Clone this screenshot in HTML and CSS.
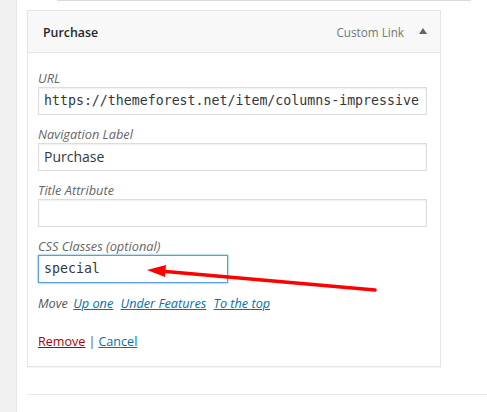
FILE: index.html
```html
<!DOCTYPE html>
<html lang="en">
<head>
<meta charset="utf-8">
<title>Menu item</title>
<link rel="stylesheet" href="styles.css">
</head>
<body>
<div class="layout">
  <aside class="sidebar"></aside>
  <main class="main">
    <div class="topline"></div>
    <div class="menu-item">
      <div class="handle">
        <span class="item-title">Purchase</span>
        <span class="controls">
          <span class="item-type">Custom Link</span>
          <svg class="toggle" width="8" height="6" viewBox="0 0 8 6"><polygon points="4,0 8,6 0,6" fill="#60666d"/></svg>
        </span>
      </div>
      <div class="settings">
        <div class="field">
          <div class="label">URL</div>
          <div class="input mono">https://themeforest.net/item/columns-impressive</div>
        </div>
        <div class="field">
          <div class="label">Navigation Label</div>
          <div class="input">Purchase</div>
        </div>
        <div class="field">
          <div class="label">Title Attribute</div>
          <div class="input"></div>
        </div>
        <div class="field">
          <div class="label">CSS Classes (optional)</div>
          <div class="input mono short focus">special</div>
        </div>
        <div class="move">
          <span class="move-label">Move</span>
          <a class="link" href="#">Up one</a>
          <a class="link" href="#">Under Features</a>
          <a class="link" href="#">To the top</a>
        </div>
        <div class="actions">
          <a class="remove" href="#">Remove</a><span class="sep">|</span><a class="cancel" href="#">Cancel</a>
        </div>
      </div>
    </div>
    <div class="bottomline"></div>
  </main>
</div>
<svg class="arrow" width="487" height="412" viewBox="0 0 487 412">
  <line x1="375" y1="290" x2="160" y2="271" stroke="#f00" stroke-width="3.5" stroke-linecap="round"/>
  <polygon points="147,270 166,265 165,277" fill="#f00"/>
</svg>
</body>
</html>
```

FILE: styles.css
```css
* { box-sizing: border-box; }
html, body { margin: 0; padding: 0; background: #fff; }
body {
  width: 487px;
  height: 412px;
  overflow: hidden;
  position: relative;
  font-family: "Open Sans", "Noto Sans", sans-serif;
  font-size: 13px;
  color: #23282d;
}
.layout { display: flex; height: 412px; }
.sidebar {
  width: 17px;
  flex: none;
  background: #f1f1f1;
  border-right: 1px solid #e6e6e6;
}
.main { flex: 1; padding-left: 10px; }
.topline {
  margin-left: 30px;
  width: 414px;
  height: 1px;
  background: #dcdcdc;
}
.menu-item {
  margin-top: 9px;
  width: 414px;
  border: 1px solid #e5e5e5;
  box-shadow: 0 1px 1px rgba(0,0,0,.04);
  background: #fff;
}
.handle {
  height: 42px;
  background: #f8f8f8;
  border-bottom: 1px solid #e5e5e5;
  display: flex;
  align-items: center;
  justify-content: space-between;
  padding: 1px 13px 0 15px;
}
.item-title { font-weight: 600; font-size: 12.4px; color: #23282d; }
.controls { display: flex; align-items: center; }
.item-type { color: #72777c; font-size: 11.7px; margin-right: 15px; }
.toggle { display: block; margin-top: -2px; }
.settings { padding: 16px 13px 14px 10px; }
.field { margin-bottom: 10px; }
.label {
  font-style: italic;
  color: #666;
  line-height: 18px;
  height: 18px;
  font-size: 12.8px;
}
.input {
  height: 28px;
  border: 1px solid #ddd;
  box-shadow: inset 0 1px 2px rgba(0,0,0,.07);
  padding: 0 5px;
  line-height: 26px;
  white-space: nowrap;
  overflow: hidden;
  font-size: 14px;
  color: #32373c;
}
.mono { font-family: "DejaVu Sans Mono", "Liberation Mono", monospace; font-size: 13.25px; }
.short { width: 190px; }
.focus { border-color: #5b9dd9; box-shadow: 0 0 2px rgba(30,140,190,.8); }
.move { line-height: 20px; font-style: italic; color: #555; font-size: 12.7px; }
.move-label { margin-right: 2px; }
.link { color: #0073aa; text-decoration: underline; margin-right: 4px; }
.actions { margin-top: 19px; line-height: 20px; font-size: 12.6px; }
.remove { color: #a00; text-decoration: underline; }
.cancel { color: #0073aa; text-decoration: underline; }
.sep { color: #555; margin: 0 3px; }
.bottomline { margin-top: 27px; height: 1px; background: #eaeaea; }
.arrow { position: absolute; left: 0; top: 0; pointer-events: none; }
```
